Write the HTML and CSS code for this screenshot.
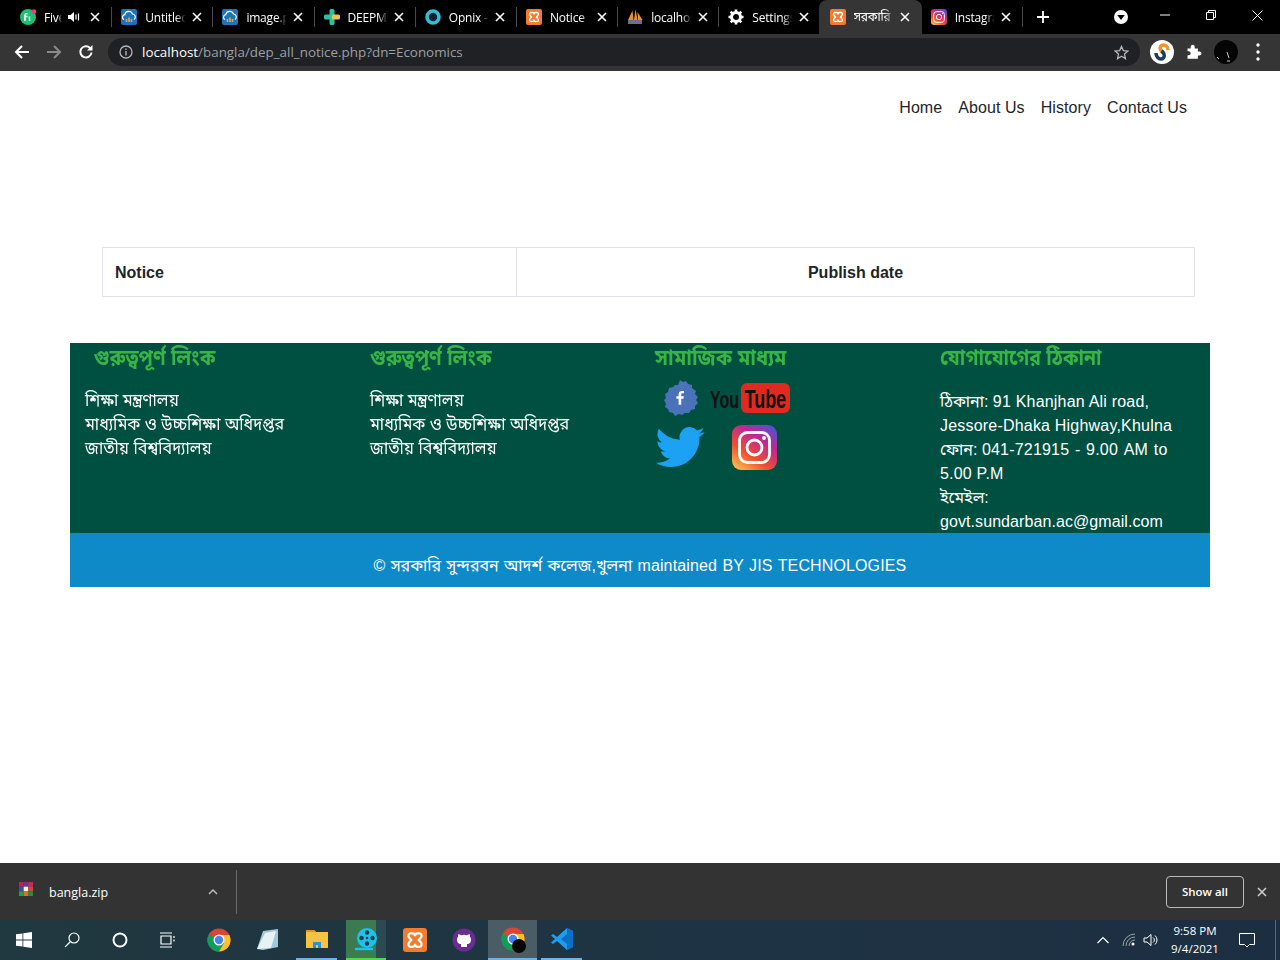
FILE: index.html
```html
<!DOCTYPE html>
<html lang="en">

<head>
    <meta charset="UTF-8">
    <meta name="viewport" content="width=device-width, initial-scale=1.0">
    <title>সরকারি সুন্দরবন আদর্শ কলেজ</title>
    <link rel="stylesheet" href="styles.css">
</head>

<body>
    <svg class="defs" width="0" height="0">
        <symbol id="close" viewBox="0 0 10 10">
            <path d="M1 1l8 8M9 1l-8 8" fill="none" stroke="currentColor" stroke-width="1.6" />
        </symbol>
        <symbol id="xampp" viewBox="0 0 16 16">
            <rect width="16" height="16" rx="2" fill="#f37b2b" />
            <path d="M5 3.500h1.500c1 0 1.500 1 1.500 2 0-1 .5-2 1.500-2H11c1.500 0 1.800 2 .8 3L10.500 8l1.300 1.500c1 1 .7 3-.8 3H9.500c-1 0-1.500-1-1.500-2 0 1-.5 2-1.500 2H5c-1.500 0-1.800-2-.8-3L5.500 8 4.200 6.500c-1-1-.7-3 .8-3z" fill="none" stroke="#fff" stroke-width="1.500" />
        </symbol>
        <symbol id="cloud" viewBox="0 0 16 16">
            <rect width="16" height="16" rx="2" fill="#1b75bc" />
            <path d="M3 10.500a2.500 2.500 0 0 1 .8-4.800A4 4 0 0 1 11.500 5a3 3 0 0 1 1.500 5.500" fill="none" stroke="#fff" stroke-width="1.200" />
            <path d="M5.500 13V10M8 13V8.500M10.500 13V10" stroke="#f5a623" stroke-width="1.600" />
        </symbol>
        <symbol id="chrome" viewBox="0 0 24 24">
            <circle cx="12" cy="12" r="11.500" fill="#db4437" />
            <path d="M12 12L2 6.200A11.500 11.500 0 0 0 12 23.500l5-8.500z" fill="#0f9d58" />
            <path d="M12 7h10.400A11.500 11.500 0 0 1 12 23.500L17 15z" fill="#fbc02d" />
            <circle cx="12" cy="12" r="5.500" fill="#fff" />
            <circle cx="12" cy="12" r="4.200" fill="#4285f4" />
        </symbol>
        <linearGradient id="insta" x1="0.100" y1="1" x2="0.800" y2="0">
            <stop offset="0" stop-color="#fdc14f" />
            <stop offset="0.350" stop-color="#f0502f" />
            <stop offset="0.700" stop-color="#c1268f" />
            <stop offset="1" stop-color="#5b4fc9" />
        </linearGradient>
        <symbol id="instagram" viewBox="0 0 45 45">
            <rect width="45" height="45" rx="9" fill="url(#insta)" />
            <rect x="7.500" y="7.500" width="30" height="30" rx="8" fill="none" stroke="#fff" stroke-width="2.800" />
            <circle cx="22.500" cy="22.500" r="7.500" fill="none" stroke="#fff" stroke-width="2.800" />
            <circle cx="32" cy="13" r="1.900" fill="#fff" />
        </symbol>
    </svg>

    <div class="screen">
        <div class="tabstrip">
            <div class="tab">
                <svg class="favicon" viewBox="0 0 16 16"><circle cx="8" cy="8" r="8" fill="#1dbf73" /><path d="M5 12V6.500C5 5 6 4.500 7.500 4.800M4 7.500h3.500M9.500 7.500V12" stroke="#fff" stroke-width="1.500" fill="none" /><circle cx="14" cy="2.500" r="2.300" fill="#f7308c" /></svg>
                <span class="tab-title short">Fiverr</span>
                <svg class="speaker" viewBox="0 0 12 12"><path d="M0 4h2.500L6 1v10L2.500 8H0z" fill="#fff" /><path d="M8 3.500v5M10.500 2.500v7" stroke="#fff" stroke-width="1.200" /></svg>
                <svg class="tab-close"><use href="#close" /></svg>
            </div>
            <div class="tab">
                <svg class="favicon"><use href="#cloud" /></svg>
                <span class="tab-title">Untitled</span>
                <svg class="tab-close"><use href="#close" /></svg>
            </div>
            <div class="tab">
                <svg class="favicon"><use href="#cloud" /></svg>
                <span class="tab-title">image.png</span>
                <svg class="tab-close"><use href="#close" /></svg>
            </div>
            <div class="tab">
                <svg class="favicon" viewBox="0 0 16 16"><rect x="5.500" y="0" width="5" height="8" rx="1.500" fill="#2ebfa5" /><rect x="0" y="5.500" width="8" height="5" rx="1.500" fill="#2ebfa5" /><rect x="5.500" y="8" width="5" height="8" rx="1.500" fill="#2ebfa5" /><rect x="8" y="5.500" width="8" height="5" rx="1.500" fill="#f5c242" /></svg>
                <span class="tab-title">DEEPMIND</span>
                <svg class="tab-close"><use href="#close" /></svg>
            </div>
            <div class="tab">
                <svg class="favicon" viewBox="0 0 16 16"><circle cx="8" cy="8" r="6" fill="#0b2530" stroke="#37bcd4" stroke-width="3.500" /></svg>
                <span class="tab-title">Opnix -</span>
                <svg class="tab-close"><use href="#close" /></svg>
            </div>
            <div class="tab">
                <svg class="favicon"><use href="#xampp" /></svg>
                <span class="tab-title">Notice</span>
                <svg class="tab-close"><use href="#close" /></svg>
            </div>
            <div class="tab">
                <svg class="favicon" viewBox="0 0 16 16"><path d="M1 11L5.500 1.500 6.500 11zM7 11L8.500 0 10.500 11zM11 11L10.500 3 15.500 11z" fill="#e8902a" /><rect x="1" y="11" width="14" height="4" fill="#6b6f8f" /></svg>
                <span class="tab-title">localhost</span>
                <svg class="tab-close"><use href="#close" /></svg>
            </div>
            <div class="tab">
                <svg class="favicon" viewBox="0 0 16 16"><circle cx="8" cy="8" r="4.500" fill="none" stroke="#fff" stroke-width="3" /><path d="M8 0.500v3M8 12.500v3M.5 8h3M12.500 8h3M2.700 2.700l2.100 2.100M11.200 11.200l2.100 2.100M13.300 2.700l-2.100 2.100M4.800 11.200l-2.100 2.100" stroke="#fff" stroke-width="2.600" /></svg>
                <span class="tab-title">Settings</span>
                <svg class="tab-close"><use href="#close" /></svg>
            </div>
            <div class="tab active">
                <svg class="favicon"><use href="#xampp" /></svg>
                <span class="tab-title bn">সরকারি</span>
                <svg class="tab-close"><use href="#close" /></svg>
            </div>
            <div class="tab">
                <svg class="favicon"><use href="#instagram" /></svg>
                <span class="tab-title">Instagram</span>
                <svg class="tab-close"><use href="#close" /></svg>
            </div>
            <svg class="new-tab" viewBox="0 0 12 12"><path d="M6 0v12M0 6h12" stroke="#fff" stroke-width="1.800" /></svg>
            <div class="strip-right">
                <svg class="media-btn" viewBox="0 0 14 14"><circle cx="7" cy="7" r="7" fill="#fff" /><path d="M3.200 5h7.600L7 10z" fill="#000" /></svg>
                <div class="win-btn"><svg width="10" height="10" viewBox="0 0 10 10"><path d="M0 5h10" stroke="#fff" /></svg></div>
                <div class="win-btn"><svg width="10" height="10" viewBox="0 0 10 10"><path d="M.5 2.500h7v7h-7zM2.500 2.500v-2h7v7h-2" fill="none" stroke="#fff" /></svg></div>
                <div class="win-btn"><svg width="11" height="11" viewBox="0 0 11 11"><path d="M.5.500l10 10M10.500.500l-10 10" stroke="#fff" /></svg></div>
            </div>
        </div>

        <div class="toolbar">
            <svg class="tool-icon" viewBox="0 0 16 16"><path d="M15 8H2M8 2L2 8l6 6" fill="none" stroke="#fff" stroke-width="2" /></svg>
            <svg class="tool-icon" viewBox="0 0 16 16"><path d="M1 8h13M8 2l6 6-6 6" fill="none" stroke="#8a8a8a" stroke-width="2" /></svg>
            <svg class="tool-icon" viewBox="0 0 16 16"><path d="M13.500 8.500A5.600 5.600 0 1 1 12 4" fill="none" stroke="#fff" stroke-width="2" /><path d="M14.500 1v5.500H9z" fill="#fff" /></svg>
            <div class="urlbar">
                <svg class="info" viewBox="0 0 14 14"><circle cx="7" cy="7" r="6" fill="none" stroke="#b5b5b5" stroke-width="1.300" /><path d="M7 6v4.500M7 3.500v1.500" stroke="#b5b5b5" stroke-width="1.400" /></svg>
                <span class="url"><b>localhost</b>/bangla/dep_all_notice.php?dn=Economics</span>
                <svg class="star" viewBox="0 0 16 16"><path d="M8 1.500l2 4.500 4.800.5-3.600 3.200 1 4.800L8 12l-4.200 2.500 1-4.800L1.200 6.500 6 6z" fill="none" stroke="#b5b5b5" stroke-width="1.400" /></svg>
            </div>
            <div class="tool-right">
                <svg class="ext" viewBox="0 0 24 24"><circle cx="12" cy="12" r="12" fill="#fff" /><path d="M18 10c0-3-2-5-4.500-5S9.500 7 10.500 9.500c.6 1.500 2 2.500 3 3.500" fill="none" stroke="#f6921e" stroke-width="3.500" /><path d="M6 13c0 3.500 2.500 6 5 6s4-2.500 2.800-5.500c-.5-1-1.300-1.800-2.300-2.500" fill="none" stroke="#1e3a66" stroke-width="3.500" /></svg>
                <svg class="ext" viewBox="0 0 24 24"><path d="M5 8h4V6a2.500 2.500 0 0 1 5 0v2h4v4h2a2.500 2.500 0 0 1 0 5h-2v4H5v-4.500h1.500a2.500 2.500 0 0 0 0-5H5z" fill="#fff" transform="translate(1.500 2) scale(.8)" /></svg>
                <svg class="ext" viewBox="0 0 24 24"><circle cx="12" cy="12" r="12" fill="#050505" /><path d="M13 12l2 6M3 17l2 2M13 21h3" stroke="#ccc" fill="none" /></svg>
                <svg class="ext" viewBox="0 0 24 24"><circle cx="12" cy="5" r="1.700" fill="#fff" /><circle cx="12" cy="12" r="1.700" fill="#fff" /><circle cx="12" cy="19" r="1.700" fill="#fff" /></svg>
            </div>
        </div>

        <main class="page">
            <nav class="top-nav">
                <a>Home</a>
                <a>About Us</a>
                <a>History</a>
                <a>Contact Us</a>
            </nav>

            <table class="notice-table">
                <tr>
                    <th class="col-notice">Notice</th>
                    <th class="col-date">Publish date</th>
                </tr>
            </table>

            <footer class="site-footer">
                <div class="footer-cols">
                    <div class="footer-col">
                        <h4 class="indent">গুরুত্বপূর্ণ লিংক</h4>
                        <ul>
                            <li>শিক্ষা মন্ত্রণালয়</li>
                            <li>মাধ্যমিক ও উচ্চশিক্ষা অধিদপ্তর</li>
                            <li>জাতীয় বিশ্ববিদ্যালয়</li>
                        </ul>
                    </div>
                    <div class="footer-col">
                        <h4>গুরুত্বপূর্ণ লিংক</h4>
                        <ul>
                            <li>শিক্ষা মন্ত্রণালয়</li>
                            <li>মাধ্যমিক ও উচ্চশিক্ষা অধিদপ্তর</li>
                            <li>জাতীয় বিশ্ববিদ্যালয়</li>
                        </ul>
                    </div>
                    <div class="footer-col">
                        <h4 class="wide">সামাজিক মাধ্যম</h4>
                        <div class="social">
                            <div class="social-row first">
                                <svg class="fb" viewBox="0 0 36 36"><path d="M18 0l3 2 3-1 2 3 4 1 0 3 4 3-1 3 3 3-2 3 2 3-3 3 0 3-4 1-2 3-4 0-3 2-3-1-4 2-2-3-4-1-1-3-3-2 1-3-2-4 2-2-1-4 3-2 1-4 4-1 2-2 3 0z" fill="#4a72b8" /><path d="M19 27V19h3l.5-3.500H19v-2c0-1 .4-1.700 1.800-1.700h1.800V8.800C22 8.700 21 8.600 20 8.600c-2.700 0-4.500 1.600-4.500 4.500v2.400h-3V19h3v8z" fill="#fff" transform="translate(5 4.500) scale(.75)" /></svg>
                                <svg class="yt" viewBox="0 0 80 32"><rect x="31" y="1" width="49" height="30" rx="6" fill="#e02a20" /><text class="yt-you" transform="translate(0 26) scale(1 1.550)">You</text><text class="yt-tube" transform="translate(34.500 26) scale(1 1.400)">Tube</text></svg>
                            </div>
                            <div class="social-row second">
                                <svg class="tw" viewBox="0 0 24 20"><path d="M24 2.400c-.9.400-1.800.700-2.800.800 1-.6 1.800-1.600 2.200-2.700-1 .6-2 1-3.100 1.200A4.900 4.900 0 0 0 11.900 6.200C7.800 6 4.200 4 1.700.9a4.900 4.900 0 0 0 1.500 6.600c-.8 0-1.600-.2-2.200-.6 0 2.400 1.700 4.400 3.900 4.900-.7.200-1.500.2-2.200.1.600 2 2.400 3.400 4.600 3.400A9.900 9.900 0 0 1 0 17.300 14 14 0 0 0 7.500 19.500c9.100 0 14.300-7.700 14-14.600 1-.7 1.800-1.500 2.500-2.500z" fill="#1da1f2" /></svg>
                                <svg class="ig"><use href="#instagram" /></svg>
                            </div>
                        </div>
                    </div>
                    <div class="footer-col">
                        <h4>যোগাযোগের ঠিকানা</h4>
                        <address class="contact">ঠিকানা: <span class="lat">91 Khanjhan Ali road,</span> <span class="lat">Jessore-Dhaka Highway,Khulna</span><br>ফোন: <span class="lat phone">041-721915 - 9.00 AM to</span> <span class="lat">5.00 P.M</span><br>ইমেইল: <span class="mail">govt.sundarban.ac@gmail.com</span></address>
                    </div>
                </div>
                <div class="copyright">© সরকারি সুন্দরবন আদর্শ কলেজ,খুলনা <span class="lat-sm">maintained BY JIS TECHNOLOGIES</span></div>
            </footer>
        </main>

        <div class="download-bar">
            <svg class="zip-icon" viewBox="0 0 15 15"><rect x="0" y="0" width="5" height="5" fill="#b5275a" /><rect x="5" y="0" width="5" height="5" fill="#7a2f8f" /><rect x="10" y="0" width="5" height="5" fill="#c92a5e" /><rect x="0" y="5" width="5" height="5" fill="#3b4fa8" /><rect x="5" y="5" width="5" height="5" fill="#f0f0f0" /><rect x="10" y="5" width="5" height="5" fill="#c94a3a" /><rect x="0" y="10" width="5" height="5" fill="#2e9a44" /><rect x="5" y="10" width="5" height="5" fill="#e0702a" /><rect x="10" y="10" width="5" height="5" fill="#2e8a3c" /></svg>
            <span class="file-name">bangla.zip</span>
            <svg class="chevron" viewBox="0 0 10 6"><path d="M1 5l4-4 4 4" fill="none" stroke="#bbb" stroke-width="1.500" /></svg>
            <span class="dl-divider"></span>
            <button class="show-all">Show all</button>
            <svg class="dl-close"><use href="#close" /></svg>
        </div>

        <div class="taskbar">
            <div class="task"><svg class="task-icon" viewBox="0 0 16 16"><path d="M0 2.300l6.500-.9v6.200H0zM7.300 1.300L16 0v7.600H7.300zM0 8.400h6.500v6.200L0 13.700zM7.300 8.400H16V16l-8.700-1.300z" fill="#fff" /></svg></div>
            <div class="task"><svg class="task-icon" viewBox="0 0 16 16"><circle cx="10" cy="6" r="5" fill="none" stroke="#fff" stroke-width="1.200" /><path d="M6.500 9.500L1 15" stroke="#fff" stroke-width="1.300" /></svg></div>
            <div class="task"><svg class="task-icon" viewBox="0 0 16 16"><circle cx="8" cy="8" r="6.500" fill="none" stroke="#fff" stroke-width="2" /></svg></div>
            <div class="task"><svg class="task-icon" viewBox="0 0 16 16"><path d="M1 4h10v8H1zM0 1h12M0 15h12M14 4v2M14 7.500v2" fill="none" stroke="#fff" stroke-width="1.200" /></svg></div>
            <div class="task pin first-pin"><svg class="app-icon"><use href="#chrome" /></svg></div>
            <div class="task pin"><svg class="app-icon" viewBox="0 0 24 24"><path d="M7 3l15-2v18l-15 3-6-1z" fill="#9fc8d8" /><path d="M1 21L9 5l11-2-5 17z" fill="#e8f2f5" /></svg></div>
            <div class="task pin running"><svg class="app-icon" viewBox="0 0 24 24"><path d="M1 3h8l2 2h12v16H1z" fill="#f5c242" /><path d="M1 3h8l2 2H1z" fill="#d99a1e" /><path d="M8 21v-6h8v6h-3v-3h-2v3z" fill="#2f8fd8" /></svg></div>
            <div class="task pin media"><svg class="app-icon" viewBox="0 0 24 24"><circle cx="13" cy="11" r="10" fill="#1ac3e8" /><path d="M1 22h18" stroke="#1ac3e8" stroke-width="2.500" /><g fill="#0c3a52"><circle cx="13" cy="5.500" r="2.200" /><circle cx="13" cy="16.500" r="2.200" /><circle cx="7.500" cy="11" r="2.200" /><circle cx="18.500" cy="11" r="2.200" /><circle cx="13" cy="11" r="1.300" /></g></svg></div>
            <div class="task pin"><svg class="app-icon"><use href="#xampp" /></svg></div>
            <div class="task pin"><svg class="app-icon" viewBox="0 0 24 24"><circle cx="12" cy="12" r="11.500" fill="#6a2c91" /><path d="M9 19v-3c-3 0-4-2-4-4.500 0-1 .3-2 1-2.700-.2-.8 0-1.800.3-2.500 1 0 1.800.5 2.700 1a9 9 0 0 1 6 0c.9-.5 1.700-1 2.700-1 .3.700.5 1.700.3 2.500.7.700 1 1.700 1 2.700 0 2.500-1 4.500-4 4.500v3z" fill="#fff" /></svg></div>
            <div class="task pin open">
                <svg class="app-icon"><use href="#chrome" /></svg>
                <span class="profile-badge"></span>
            </div>
            <div class="task pin running"><svg class="app-icon" viewBox="0 0 24 24"><path d="M17 1l6 3v16l-6 3L7 14l-4 3-2-1.500L5 12 1 8.500 3 7l4 3z" fill="#1f9cf0" /><path d="M17 1l6 3v16l-6 3zM17 7l-6 5 6 5z" fill="#0a6fc2" /></svg></div>
            <div class="tray">
                <svg class="tray-icon" viewBox="0 0 12 7"><path d="M.5 6.500L6 1l5.500 5.500" fill="none" stroke="#fff" stroke-width="1.200" /></svg>
                <svg class="tray-icon wifi" viewBox="0 0 14 14"><path d="M1 13A12 12 0 0 1 13 1M4 13a9 9 0 0 1 9-9M7 13a6 6 0 0 1 6-6" fill="none" stroke="#99a5aa" /><circle cx="11" cy="11" r="1.500" fill="#fff" /></svg>
                <svg class="tray-icon volume" viewBox="0 0 16 14"><path d="M1 5h3l4-3.500v11L4 9H1z" fill="none" stroke="#fff" /><path d="M10 4.500a3 3 0 0 1 0 5M12 2.500a6 6 0 0 1 0 9" fill="none" stroke="#fff" /></svg>
                <div class="clock"><span>9:58 PM</span><span>9/4/2021</span></div>
                <svg class="notify" viewBox="0 0 16 16"><path d="M.5 1.500h15v11h-5l-2.500 2.500-2.500-2.500h-5z" fill="none" stroke="#fff" /></svg>
                <span class="show-desktop"></span>
            </div>
        </div>
    </div>
</body>

</html>
```

FILE: styles.css
```css
html,
body {
    width: 100%;
    height: 100%;
    margin: 0;
    padding: 0;
    background-color: #fff;
}

.defs {
    display: block;
    position: absolute;
}

.screen {
    display: flex;
    flex-direction: column;
    height: 960px;
    overflow: hidden;
    font-family: "Liberation Sans", "Noto Sans Bengali", "Noto Serif Bengali", sans-serif;
}

/* browser tabs */
.tabstrip {
    display: flex;
    align-items: center;
    height: 34px;
    padding-left: 11px;
    background-color: #000;
    font-family: "Open Sans", "Noto Sans Bengali", sans-serif;
    color: #fff;
}

.tab {
    display: flex;
    align-items: center;
    flex: none;
    box-sizing: border-box;
    width: 101.2px;
    height: 34px;
    padding: 0 11.5px 0 9px;
    position: relative;
}

.tab::after {
    content: "";
    position: absolute;
    right: 0;
    top: 7px;
    width: 1px;
    height: 20px;
    background-color: #4a4a4a;
}

.tab:nth-child(8)::after,
.tab.active::after {
    display: none;
}

.tab.active {
    background-color: #353535;
    box-shadow: -2px 0 0 #353535;
    border-radius: 8px 8px 0 0;
}

.favicon {
    flex: none;
    width: 16px;
    height: 16px;
    margin-right: 8px;
}

.tab-title {
    flex: 1;
    overflow: hidden;
    white-space: nowrap;
    font-size: 12px;
    letter-spacing: -0.2px;
    -webkit-mask-image: linear-gradient(to right, #000 75%, transparent);
    mask-image: linear-gradient(to right, #000 75%, transparent);
}

.tab-title.short {
    flex: none;
    width: 18px;
}

.speaker {
    flex: none;
    width: 12px;
    height: 12px;
    margin: 0 4px 0 6px;
}

.tab-close {
    flex: none;
    width: 10px;
    height: 10px;
    margin-left: 6px;
    color: #fff;
}

.new-tab {
    width: 12px;
    height: 12px;
    margin-left: 14px;
}

.strip-right {
    display: flex;
    align-items: center;
    margin-left: auto;
}

.media-btn {
    width: 14px;
    height: 14px;
    margin-right: 14px;
}

.win-btn {
    display: flex;
    justify-content: center;
    padding-bottom: 4px;
    width: 46px;
}

/* address bar row */
.toolbar {
    display: flex;
    align-items: center;
    height: 37px;
    padding: 0 0 1px 14px;
    box-sizing: border-box;
    background-color: #353535;
}

.tool-icon {
    width: 16px;
    height: 16px;
    margin-right: 16px;
}

.urlbar {
    display: flex;
    align-items: center;
    width: 1032px;
    height: 28px;
    margin-left: -2px;
    padding: 0 11px;
    box-sizing: border-box;
    border-radius: 14px;
    background-color: #202124;
}

.info {
    width: 14px;
    height: 14px;
    margin-right: 9px;
}

.url {
    flex: 1;
    font-family: "Open Sans", sans-serif;
    font-size: 13.4px;
    color: #9aa0a6;
}

.url b {
    font-weight: 400;
    color: #fff;
}

.star {
    width: 15px;
    height: 15px;
}

.tool-right {
    display: flex;
    align-items: center;
    gap: 8px;
    margin-left: 10px;
}

.ext {
    width: 24px;
    height: 24px;
}

/* the page itself */
.page {
    flex: 1;
    background-color: #fff;
}

.top-nav {
    display: flex;
    justify-content: flex-end;
    gap: 16px;
    padding: 25px 93px 0 0;
    font-size: 16px;
    line-height: 24px;
    letter-spacing: 0.08px;
    color: #212529;
}

.notice-table {
    width: 1093px;
    margin: 127px 0 46px 102px;
    border-collapse: collapse;
    font-size: 16px;
    color: #212529;
}

.notice-table th {
    height: 49px;
    padding: 2px 12px 0;
    border: 1px solid #dee2e6;
    box-sizing: border-box;
}

.col-notice {
    width: 414px;
    text-align: left;
}

.col-date {
    text-align: center;
}

.site-footer {
    margin: 0 70px;
    color: #fff;
}

.footer-cols {
    display: grid;
    grid-template-columns: repeat(4, 285px);
    height: 190px;
    background-color: #005041;
}

.footer-col {
    padding: 1px 15px 0;
}

/* the bangla font here runs wider than the one in the design */
.footer-col h4 {
    margin: 0 0 16px;
    font-size: 22px;
    line-height: 28px;
    color: #38b444;
    white-space: nowrap;
    transform: scaleX(0.88);
    transform-origin: left;
}

.footer-col h4.wide {
    transform: scaleX(0.915);
}

.footer-col .indent {
    padding-left: 10px;
}

.footer-col ul {
    margin: 0;
    padding: 0;
    list-style: none;
    font-size: 18px;
    line-height: 24px;
    white-space: nowrap;
    transform: scaleX(0.895);
    transform-origin: left;
}

.social {
    margin-top: -11px;
}

.social-row {
    display: flex;
    align-items: center;
}

.social-row.first {
    padding-left: 7px;
    height: 42px;
}

.social-row.second {
    margin-top: 6px;
}

.fb {
    width: 36px;
    height: 36px;
    margin-right: 12px;
}

.yt {
    width: 80px;
    height: 32px;
}

.yt-you,
.yt-tube {
    font-family: "Liberation Sans", sans-serif;
    font-size: 16px;
    font-weight: 700;
    fill: #111;
}

.yt-tube {
    font-size: 18px;
}

.tw {
    width: 50px;
    height: 41px;
    margin-right: 27px;
}

.ig {
    width: 45px;
    height: 45px;
}

.contact {
    font-size: 16px;
    font-style: normal;
    line-height: 24px;
    width: 240px;
    margin-top: 18px;
}

.lat {
    letter-spacing: 0.2px;
}

.phone {
    word-spacing: 1px;
}

.mail {
    letter-spacing: 0.08px;
}

.copyright {
    height: 54px;
    box-sizing: border-box;
    padding-top: 21px;
    background-color: #0e8ac8;
    font-size: 16px;
    line-height: 24px;
    word-spacing: 0.8px;
    text-align: center;
}

.lat-sm {
    letter-spacing: 0.13px;
}

/* downloads shelf */
.download-bar {
    display: flex;
    align-items: center;
    height: 57px;
    padding: 0 13px 0 19px;
    box-sizing: border-box;
    background-color: #333;
    color: #fff;
    font-family: "Open Sans", sans-serif;
}

.zip-icon {
    width: 14px;
    height: 14px;
    margin: -6px 16px 0 0;
}

.file-name {
    width: 159px;
    padding-top: 1px;
    font-size: 12.5px;
}

.chevron {
    width: 10px;
    height: 6px;
}

.dl-divider {
    width: 1px;
    height: 44px;
    margin-left: 18px;
    background-color: #6a6a6a;
}

.show-all {
    width: 78px;
    height: 32px;
    margin-left: auto;
    border: 1px solid #bbb;
    border-radius: 4px;
    background: transparent;
    color: #fff;
    font-family: "Open Sans", sans-serif;
    font-size: 11.5px;
    font-weight: 600;
}

.dl-close {
    width: 10px;
    height: 10px;
    margin-left: 13px;
    color: #ccc;
}

/* windows taskbar */
.taskbar {
    display: flex;
    height: 40px;
    background: linear-gradient(to right, #20383f, #1e3344 60%, #1c2f42);
}

.task {
    display: flex;
    align-items: center;
    justify-content: center;
    width: 48px;
    height: 40px;
    box-sizing: border-box;
    position: relative;
}

.task.pin {
    width: 49px;
}

.first-pin {
    margin-left: 2px;
}

.task-icon {
    width: 16px;
    height: 16px;
}

.app-icon {
    width: 24px;
    height: 24px;
}

.task.running {
    width: 41px;
    margin: 0 4px;
    border-bottom: 2px solid #6fb3e6;
}

.open {
    background-color: #4a5c66;
    border-bottom: 2px solid #6fb3e6;
}

.task.media {
    width: 40px;
    margin: 0 4.5px;
    background: linear-gradient(to right, #3c7a52 75%, #2d4a52 75%);
    border-bottom: 2px solid #4fdc3c;
}

.profile-badge {
    position: absolute;
    right: 11px;
    bottom: 5px;
    width: 14px;
    height: 14px;
    border-radius: 50%;
    background-color: #050505;
}

.tray {
    display: flex;
    align-items: center;
    margin-left: auto;
    color: #fff;
}

.tray-icon {
    width: 12px;
    height: 12px;
    margin-right: 13px;
}

.tray-icon.wifi {
    width: 14px;
    height: 14px;
    margin-right: 7px;
}

.tray-icon.volume {
    width: 16px;
    height: 14px;
    margin-right: 4px;
}

.clock {
    display: flex;
    flex-direction: column;
    align-items: center;
    width: 64px;
    font-family: "Open Sans", sans-serif;
    font-size: 11.5px;
    line-height: 18px;
}

.notify {
    width: 16px;
    height: 16px;
    margin: 0 20px 0 12px;
}

.show-desktop {
    width: 1px;
    height: 40px;
    margin-right: 4px;
    background-color: #5a6a72;
}
```
